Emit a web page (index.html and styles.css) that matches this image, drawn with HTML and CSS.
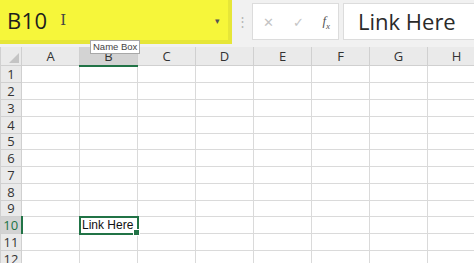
FILE: index.html
```html
<!DOCTYPE html>
<html lang="en">
  <head>
    <meta charset="UTF-8" />
    <title>Name Box</title>
    <link rel="stylesheet" href="styles.css">
  </head>
  <body>
    <div class="formula-bar">
      <div class="name-box">
        <span class="cell-ref">B10</span>
        <span class="ibeam">I</span>
        <span class="drop">&#9662;</span>
      </div>
      <div class="grip">&#8942;</div>
      <div class="fx-buttons">
        <span class="fx-btn">&#10005;</span>
        <span class="fx-btn">&#10003;</span>
        <span class="fx-btn fx">f<sub>x</sub></span>
      </div>
      <div class="formula">Link Here</div>
      <div class="tooltip">Name Box</div>
    </div>

    <table class="sheet">
      <colgroup>
        <col class="col-head" />
        <col /><col /><col /><col /><col /><col /><col /><col />
      </colgroup>
      <thead>
        <tr>
          <th class="corner"><span class="tri"></span></th>
          <th>A</th>
          <th class="active">B</th>
          <th>C</th>
          <th>D</th>
          <th>E</th>
          <th>F</th>
          <th>G</th>
          <th>H</th>
        </tr>
      </thead>
      <tbody>
        <tr><th>1</th><td></td><td></td><td></td><td></td><td></td><td></td><td></td><td></td></tr>
        <tr><th>2</th><td></td><td></td><td></td><td></td><td></td><td></td><td></td><td></td></tr>
        <tr><th>3</th><td></td><td></td><td></td><td></td><td></td><td></td><td></td><td></td></tr>
        <tr><th>4</th><td></td><td></td><td></td><td></td><td></td><td></td><td></td><td></td></tr>
        <tr><th>5</th><td></td><td></td><td></td><td></td><td></td><td></td><td></td><td></td></tr>
        <tr><th>6</th><td></td><td></td><td></td><td></td><td></td><td></td><td></td><td></td></tr>
        <tr><th>7</th><td></td><td></td><td></td><td></td><td></td><td></td><td></td><td></td></tr>
        <tr><th>8</th><td></td><td></td><td></td><td></td><td></td><td></td><td></td><td></td></tr>
        <tr><th>9</th><td></td><td></td><td></td><td></td><td></td><td></td><td></td><td></td></tr>
        <tr><th class="active">10</th><td></td><td class="selected">Link Here</td><td></td><td></td><td></td><td></td><td></td><td></td></tr>
        <tr><th>11</th><td></td><td></td><td></td><td></td><td></td><td></td><td></td><td></td></tr>
        <tr><th>12</th><td></td><td></td><td></td><td></td><td></td><td></td><td></td><td></td></tr>
      </tbody>
    </table>
  </body>
</html>
```

FILE: styles.css
```css
body {
  margin: 0;
  width: 474px;
  height: 263px;
  overflow: hidden;
  background-color: #fff;
  font-family: "Open Sans", "Noto Sans", sans-serif;
  color: #222;
}

.formula-bar {
  position: relative;
  display: flex;
  align-items: flex-start;
  height: 47px;
  background-color: #f1f1f1;
}

.name-box {
  display: flex;
  align-items: center;
  box-sizing: border-box;
  width: 232px;
  height: 44px;
  padding: 0 8px 0 7px;
  background-color: #f6f63a;
  border: 4px solid #e6e638;
  border-left: none;
  border-top: none;
}

.cell-ref {
  font-size: 22px;
  color: #1e1e1e;
  letter-spacing: 0.3px;
}

.ibeam {
  margin-left: 13px;
  font-family: "DejaVu Serif", serif;
  font-size: 15px;
  color: #444;
}

.drop {
  margin-left: auto;
  font-size: 9px;
  color: #555;
}

.grip {
  width: 20px;
  padding-top: 12px;
  text-align: center;
  font-size: 13px;
  color: #b5b5b5;
}

.fx-buttons {
  display: flex;
  align-items: center;
  justify-content: space-between;
  box-sizing: border-box;
  width: 87px;
  height: 37px;
  margin-top: 3px;
  padding: 0 8px 0 10px;
  background-color: #fff;
  border: 1px solid #dcdcdc;
}

.fx-btn {
  font-size: 13px;
  color: #c4c4c4;
}

.fx {
  font-family: "Liberation Serif", serif;
  font-style: italic;
  font-size: 13px;
  color: #555;
}

.fx sub {
  font-size: 9px;
}

.formula {
  box-sizing: border-box;
  flex: 1;
  height: 37px;
  margin: 3px 0 0 4px;
  padding: 2px 0 0 14px;
  background-color: #fff;
  border: 1px solid #dcdcdc;
  border-right: none;
  font-size: 22px;
  color: #2a2a2a;
}

.tooltip {
  position: absolute;
  left: 90px;
  top: 40px;
  z-index: 2;
  padding: 0 2px;
  background-color: #fff;
  border: 1px solid #a8a8a8;
  font-family: "Liberation Sans", sans-serif;
  font-size: 9.5px;
  line-height: 12px;
  color: #444;
}

.sheet {
  table-layout: fixed;
  border-collapse: collapse;
  width: 486px;
  font-size: 13px;
  line-height: 14px;
}

.sheet col {
  width: 58px;
}

.sheet .col-head {
  width: 21px;
}

.sheet th {
  height: 15.75px;
  padding: 0;
  background-color: #eaeaea;
  border: 1px solid #d0d0d0;
  font-weight: normal;
  color: #333;
  text-align: center;
}

.sheet thead th {
  height: 17.5px;
  border-top: none;
}

.sheet thead th.active {
  background-color: #d3d3d3;
  border-bottom: 2px solid #217346;
}

.sheet tbody th.active {
  background-color: #d3d3d3;
  color: #217346;
  border-right: 2px solid #217346;
}

.corner {
  position: relative;
}

.tri {
  position: absolute;
  right: 2px;
  bottom: 2px;
  border-left: 10px solid transparent;
  border-bottom: 10px solid #c4c4c4;
}

.sheet td {
  height: 15.75px;
  padding: 0 2px;
  border: 1px solid #dadada;
  font-family: "Liberation Sans", sans-serif;
  font-size: 12px;
  white-space: nowrap;
}

.sheet td.selected {
  position: relative;
  outline: 2px solid #217346;
  outline-offset: -1px;
  color: #111;
}

.sheet td.selected::after {
  content: "";
  position: absolute;
  right: -3px;
  bottom: -3px;
  width: 5px;
  height: 5px;
  background-color: #217346;
  border: 1px solid #fff;
}
```
